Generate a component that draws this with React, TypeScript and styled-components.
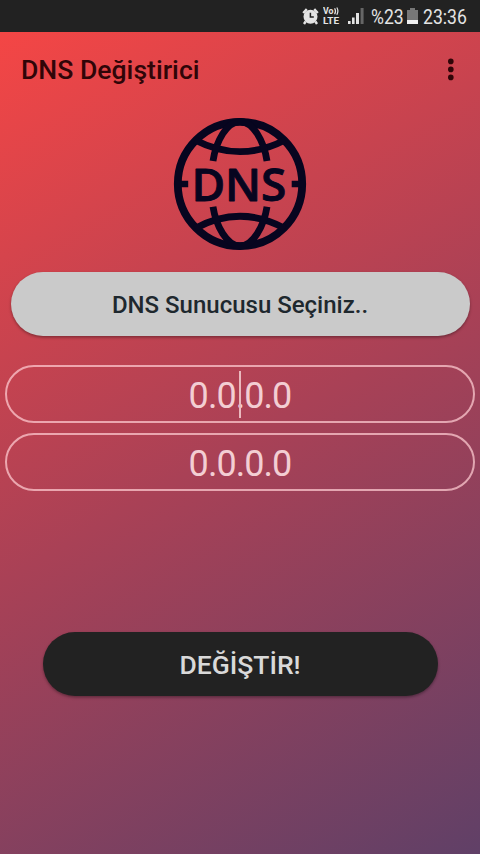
import React from "react";
import styled, { createGlobalStyle } from "styled-components";

const GlobalStyle = createGlobalStyle`
  * { box-sizing: border-box; }
  html, body { margin: 0; padding: 0; }
  body { background: #222; font-family: Roboto, "Noto Sans", sans-serif; }
`;

const Screen = styled.div`
  width: 480px;
  height: 854px;
  display: flex;
  flex-direction: column;
  overflow: hidden;
`;

const StatusBar = styled.header`
  height: 32px;
  flex: none;
  display: flex;
  align-items: center;
  justify-content: flex-end;
  padding-right: 12px;
  background: #222222;
  color: #e4e4e4;
`;

const StatusText = styled.span<{ $width: number }>`
  width: ${(p) => p.$width}px;
  flex: none;
  font-size: 20px;
  line-height: 32px;
  padding-top: 1px;
  white-space: nowrap;
  transform: scaleX(0.88);
  transform-origin: left center;
`;

const StatusSvg = styled.svg<{ $gap: number }>`
  display: block;
  flex: none;
  margin-right: ${(p) => p.$gap}px;
`;

const Content = styled.main`
  flex: 1;
  display: flex;
  flex-direction: column;
  align-items: center;
  background: linear-gradient(149.7deg, #f44645 0%, #a94156 50%, #604067 100%);
`;

const AppBar = styled.div`
  width: 100%;
  height: 76px;
  display: flex;
  align-items: center;
  justify-content: space-between;
  padding: 0 26px 0 21px;
`;

const Title = styled.h1`
  margin: 0;
  font-size: 26.6px;
  font-weight: 500;
  line-height: 32px;
  color: #300508;
`;

const MenuButton = styled.button`
  border: 0;
  padding: 0;
  background: none;
`;

const Logo = styled.svg`
  display: block;
  margin-top: 6px;
`;

const PillButton = styled.button<{ $dark?: boolean }>`
  border: 0;
  width: ${(p) => (p.$dark ? 395 : 459)}px;
  height: 64px;
  flex: none;
  margin-top: ${(p) => (p.$dark ? 141 : 18)}px;
  border-radius: 32px;
  padding: ${(p) => (p.$dark ? 0 : 2)}px 0 0;
  font-family: inherit;
  font-weight: 500;
  font-size: ${(p) => (p.$dark ? 26.5 : 24)}px;
  background: ${(p) => (p.$dark ? "#222222" : "#cacaca")};
  color: ${(p) => (p.$dark ? "#d9d9d9" : "#1e282e")};
  box-shadow: 0 1.5px 3px rgba(0, 0, 0, 0.35);
`;

const Fields = styled.div`
  margin-top: 29px;
  display: flex;
  flex-direction: column;
  gap: 10px;
`;

const Field = styled.div`
  position: relative;
  width: 470px;
  height: 58px;
  border: 2px solid rgba(255, 205, 210, 0.72);
  border-radius: 29px;
  display: flex;
  align-items: center;
  justify-content: center;
  padding-top: 4px;
  font-size: 36px;
  letter-spacing: -0.95px;
  color: #f3ced3;
`;

const Caret = styled.span`
  position: absolute;
  left: 232px;
  top: 4px;
  width: 2px;
  height: 47px;
  background: #eab9be;
`;

function StatusIcons() {
  return (
    <>
      <StatusSvg $gap={4} width="17" height="17" viewBox="0 0 17 17">
        <path d="M1.2 5 4.8 1.2M15.8 5 12.2 1.2M3.6 13.5 2 16M13.4 13.5 15 16" stroke="#e4e4e4" strokeWidth="2.4" />
        <circle cx="8.5" cy="8.7" r="7" fill="#e4e4e4" />
        <path d="M8.4 4.8v4.3h3.4" fill="none" stroke="#222" strokeWidth="1.5" />
      </StatusSvg>
      <StatusSvg $gap={8} width="17" height="20" viewBox="0 0 17 20" fill="#e4e4e4" fontFamily="Roboto, sans-serif" fontWeight="700">
        <text x="0" y="8.2" fontSize="8.2" textLength="10.5" lengthAdjust="spacingAndGlyphs">Vo</text>
        <path d="M11.6 2.2q1.8 2.8 0 6M13.8 1.5q2.2 3.4 0 7.2" fill="none" stroke="#e4e4e4" strokeWidth="1.2" />
        <text x="0" y="17.6" fontSize="9.4" textLength="16" lengthAdjust="spacingAndGlyphs">LTE</text>
      </StatusSvg>
      <StatusSvg $gap={7} width="16" height="16" viewBox="0 0 16 16">
        <path d="M0 13h2.6v3H0zM4 9.5h2.6V16H4zM8 5h3v11H8z" fill="#e4e4e4" />
        <path d="M12.6 0h3v16h-3z" fill="#666" />
      </StatusSvg>
      <StatusText $width={36}>%23</StatusText>
      <StatusSvg $gap={5} width="11" height="16" viewBox="0 0 11 16">
        <path d="M3 0h5v2h3v10H0V2h3z" fill="#777" />
        <path d="M0 12h11v4H0z" fill="#f0f0f0" />
      </StatusSvg>
      <StatusText $width={45}>23:36</StatusText>
    </>
  );
}

function DnsLogo() {
  return (
    <Logo width="140" height="140" viewBox="0 0 140 140">
      <g fill="none" stroke="#07051f">
        <circle cx="70" cy="70" r="62.2" strokeWidth="7.8" />
        <g strokeWidth="6.8">
          <path d="M25 26Q70 49.4 115 26M25 114.5Q70 90.1 115 114.5" />
          <path d="M43 47C46 27 57 7.5 70 7.5S94 27 97 47M43 92.7C46 112 57 132 70 132S94 112 97 92.7" />
        </g>
        <path d="M8 70h10.2M121.7 70H132" strokeWidth="6.5" />
      </g>
      <text
        x="21.4"
        y="86.5"
        fontFamily="'Open Sans', sans-serif"
        fontWeight="600"
        fontSize="46"
        textLength="95"
        lengthAdjust="spacingAndGlyphs"
        fill="#07051f"
        stroke="#07051f"
        strokeWidth="0.9"
        strokeLinejoin="round"
      >
        DNS
      </text>
    </Logo>
  );
}

export default function App() {
  return (
    <>
      <GlobalStyle />
      <Screen>
        <StatusBar><StatusIcons /></StatusBar>
        <Content>
          <AppBar>
            <Title>DNS Değiştirici</Title>
            <MenuButton aria-label="Menü">
              <svg width="6" height="24" viewBox="0 0 6 24" fill="#300508" display="block">
                <circle cx="2.8" cy="3.4" r="2.8" />
                <circle cx="2.8" cy="11.4" r="2.8" />
                <circle cx="2.8" cy="19.4" r="2.8" />
              </svg>
            </MenuButton>
          </AppBar>
          <DnsLogo />
          <PillButton>DNS Sunucusu Seçiniz..</PillButton>
          <Fields>
            <Field>0.0.0.0<Caret /></Field>
            <Field>0.0.0.0</Field>
          </Fields>
          <PillButton $dark>DEĞİŞTİR!</PillButton>
        </Content>
      </Screen>
    </>
  );
}
